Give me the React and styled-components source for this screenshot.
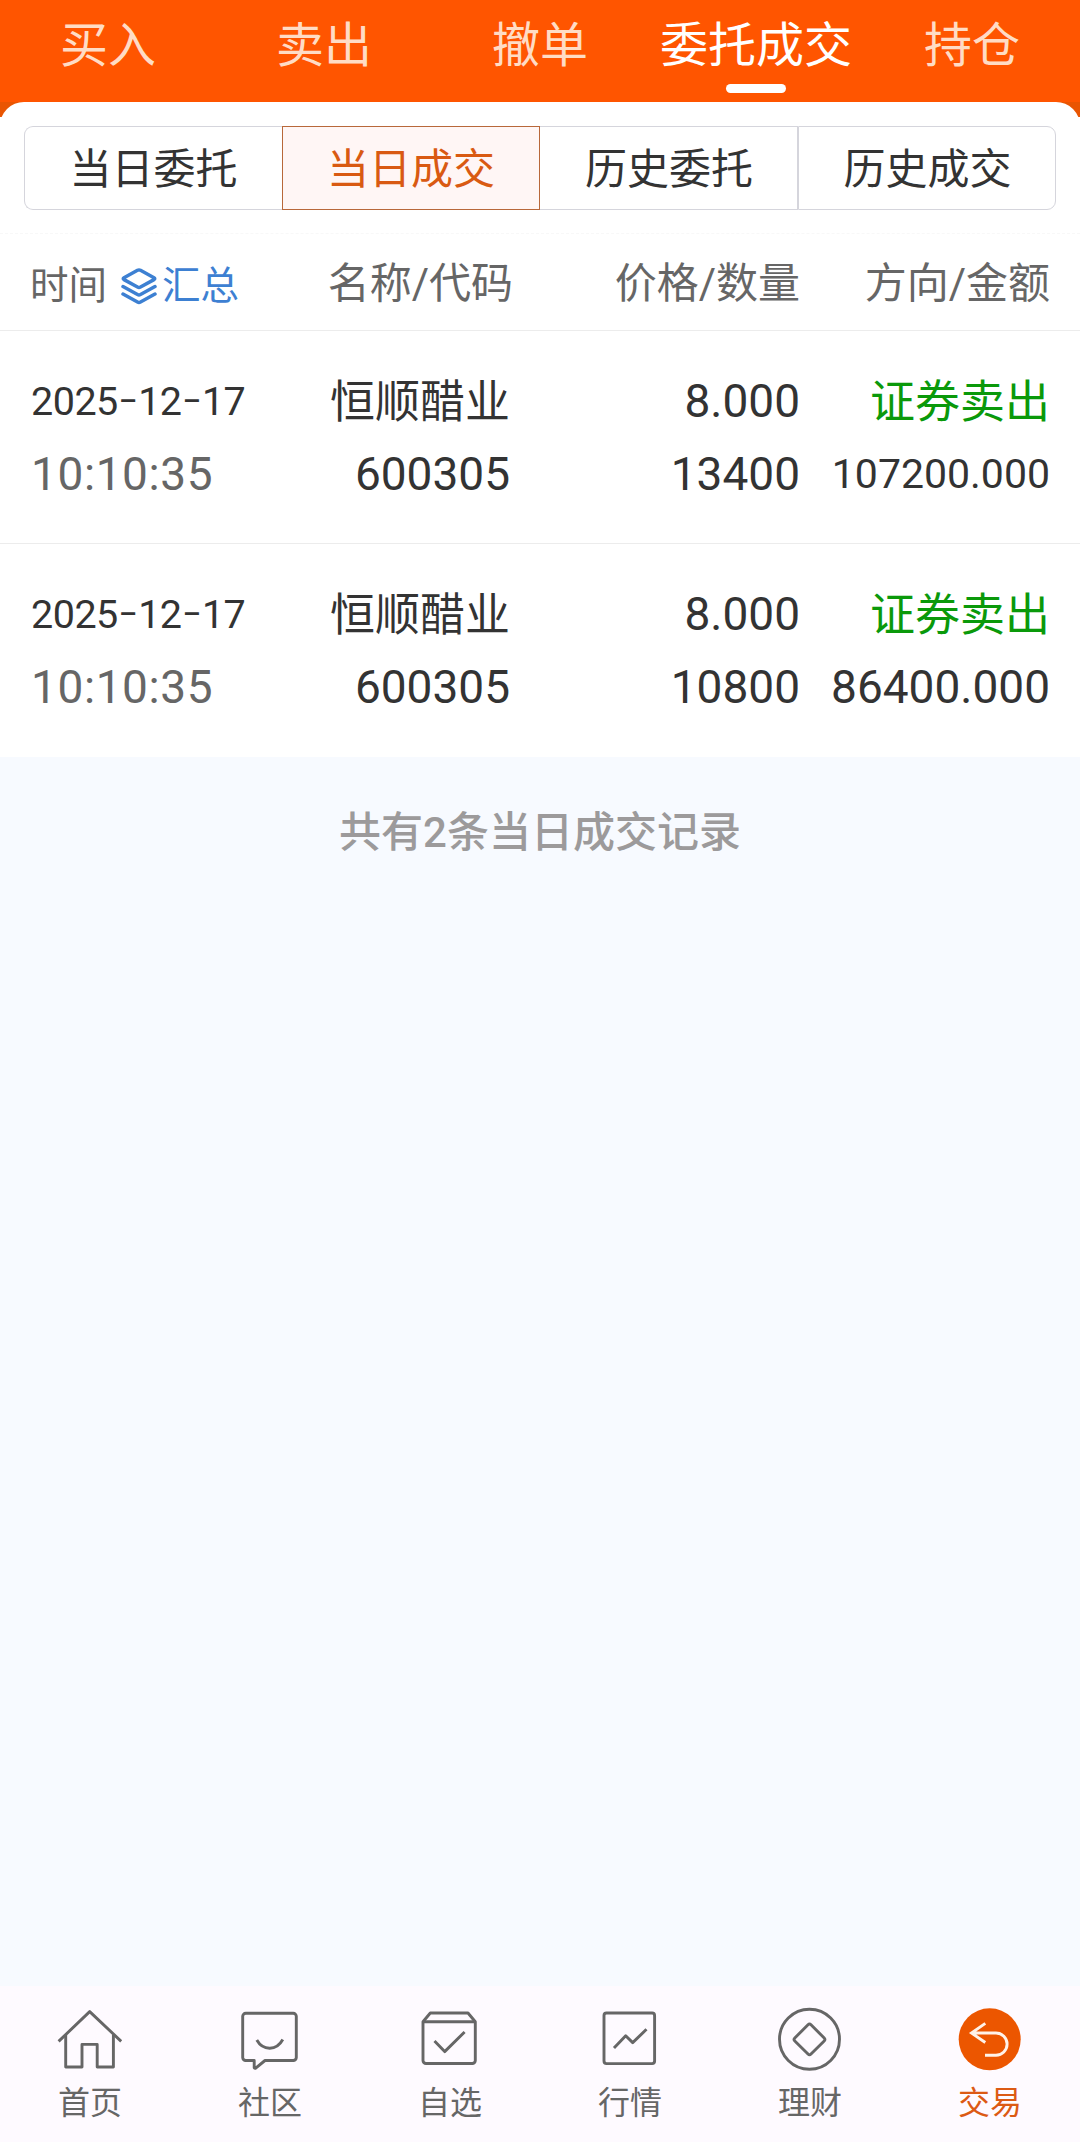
import React, { useState } from "react";
import styled, { createGlobalStyle } from "styled-components";

const GlobalStyle = createGlobalStyle`
* {
	box-sizing: border-box;
}

body {
	margin: 0;
	background: #f7faff;
	font-family: Roboto, "Noto Sans CJK SC", sans-serif;
	color: #333;
}
`;

const Page = styled.div`
display: flex;
flex-direction: column;
width: 1080px;
height: 2142px;
background: #f7faff;
overflow: hidden;
`;

const TopBar = styled.nav`
display: flex;
height: 102px;
background: #ff5500;
`;

const TopTab = styled.a`
display: flex;
flex-direction: column;
align-items: center;
width: 216px;
padding-top: 16px;
font-size: 48px;
line-height: 60px;
color: ${({ $active }) => ($active ? "#fff" : "#ffdcc5")};
cursor: pointer;

&::after {
	content: "";
	width: 60px;
	height: 9px;
	margin-top: 8px;
	border-radius: 4.5px;
	background: ${({ $active }) => ($active ? "#fff" : "transparent")};
}
`;

const PanelBack = styled.div`
background: linear-gradient(#e95502 15px, #fff 15px);
`;

const Panel = styled.main`
background: #fff;
border-radius: 24px 24px 0 0;
`;

const SegmentWrap = styled.div`
height: 132px;
padding: 24px 24px 0;
border-bottom: 1px dashed #f8f8f8;
`;

const Segment = styled.div`
display: flex;
height: 84px;
`;

const SegmentItem = styled.button`
flex: none;
width: 258px;
margin: 0;
padding: 3px 0 0;
border: 1px solid ${({ $active }) => ($active ? "#b8683a" : "#d5d5dc")};
border-left-width: ${({ $merge }) => ($merge ? 0 : "1px")};
background: ${({ $active }) => ($active ? "#fff6f5" : "#fff")};
color: ${({ $active }) => ($active ? "#d95a12" : "#333")};
font-family: inherit;
font-size: 42px;
line-height: 79px;
cursor: pointer;

&:first-child {
	border-right-width: 0;
	border-radius: 9px 0 0 9px;
}

&:nth-child(n + 3) {
	padding-left: 1px;
}

&:last-child {
	border-radius: 0 9px 9px 0;
}
`;

const Columns = styled.div`
display: grid;
grid-template-columns: 220px 260px 290px 250px;
padding: 0 30px;
`;

const HeaderRow = styled(Columns)`
height: 97px;
padding-top: 19px;
border-bottom: 1px solid #ececec;
color: #666;
font-size: 42px;
line-height: 62px;
`;

const HeaderCell = styled.div`
text-align: right;
white-space: nowrap;

&:nth-child(2) {
	margin-right: -3px;
}
`;

const TimeHeader = styled.div`
display: flex;
align-items: center;
align-self: start;
padding-top: 2px;
font-size: 38.5px;
`;

const Summary = styled.span`
display: flex;
align-items: center;
gap: 5px;
margin-left: 14px;
color: #3d80d2;
`;

const RecordRow = styled(Columns)`
height: 213px;
padding-top: 34px;
border-bottom: ${({ $last }) => ($last ? "none" : "1px solid #ececec")};
`;

const Cell = styled.div`
display: flex;
flex-direction: column;
align-items: ${({ $left }) => ($left ? "flex-start" : "flex-end")};
font-size: 46px;
line-height: 73px;
white-space: nowrap;
`;

const DateText = styled.span`
padding-left: 1px;
font-size: 39.5px;
letter-spacing: -0.5px;
`;

const Dash = styled.span`
font-family: Inter, sans-serif;
font-size: 46px;
font-weight: 300;
line-height: 1;
`;

const TimeText = styled.span`
padding-left: 1px;
letter-spacing: 0.6px;
color: #666;
`;

const Name = styled.span`
height: 73px;
padding-top: 2px;
font-size: 45px;
line-height: 72px;
color: ${({ $sell }) => ($sell ? "#0a990a" : "#333")};
`;

const Amount = styled.span`
font-size: ${({ $long }) => ($long ? "41px" : "46px")};
`;

const Total = styled.p`
flex: 1;
margin: 0;
padding-top: 45px;
text-align: center;
font-size: 42px;
font-weight: 500;
line-height: 62px;
color: #9c9a9b;
`;

const BottomBar = styled.nav`
display: flex;
height: 156px;
background: #fefaff;
`;

const BottomItem = styled.a`
display: flex;
flex-direction: column;
align-items: center;
width: 180px;
padding-top: 20px;
font-size: 32px;
line-height: 40px;
color: ${({ $active }) => ($active ? "#dc5a14" : "#666")};
cursor: pointer;

svg {
	overflow: visible;
}

span {
	margin-top: 13px;
}
`;

const LineIcon = ({ children }) => (
	<svg width="64" height="64" viewBox="0 0 64 64" fill="none" stroke="#666" strokeWidth="2.9" strokeLinejoin="round">
		{children}
	</svg>
);

const LayersIcon = () => (
	<svg width="36" height="38" viewBox="0 0 36 38" fill="none" stroke="currentColor" strokeWidth="3.5" strokeLinejoin="round" strokeLinecap="round">
		<path d="M16.5 3.3Q18 2.5 19.5 3.3L33 10.8Q34.5 11.7 33 12.6L19.5 20Q18 20.8 16.5 20L3 12.6Q1.5 11.7 3 10.8Z" />
		<path d="M2 19.5 16.5 27.5Q18 28.3 19.5 27.5L34 19.5" />
		<path d="M2 27 16.5 35Q18 35.8 19.5 35L34 27" />
	</svg>
);

const HomeIcon = () => (
	<LineIcon>
		<path d="M.6 35.4 31.7 5.6 63.2 35.4" />
		<path d="M7.7 29V61H24V38.4H39.2V61H55.4V29" />
	</LineIcon>
);

const ChatIcon = () => (
	<LineIcon>
		<path d="M7.7 7.3H55.3a3 3 0 0 1 3 3V51.5a3 3 0 0 1-3 3H27L17.4 62.3 16.2 61.8V54.5H7.7a3 3 0 0 1-3-3V10.3a3 3 0 0 1 3-3Z" />
		<path d="M18.8 34C25 45 38.5 45 44.8 33.5" />
	</LineIcon>
);

const BoxIcon = () => (
	<LineIcon>
		<path d="M5 15.7V54.5a3 3 0 0 0 3 3H54.3a3 3 0 0 0 3-3V15.7L50 7H12.3Z" />
		<path d="M5 15.7H57.3" />
		<path d="M16.5 35 26.7 45.6 46.6 26" />
	</LineIcon>
);

const ChartIcon = () => (
	<LineIcon>
		<rect x="6" y="7" width="50.6" height="50.6" rx="2.5" />
		<path d="M16 42 27.7 29.8 34.7 36.6 48.5 23.3" />
	</LineIcon>
);

const CoinIcon = () => (
	<LineIcon>
		<circle cx="31.5" cy="33.3" r="30" />
		<path d="M30 18.8Q31.5 17.3 33 18.8L46.2 32Q47.7 33.5 46.2 35L33 48Q31.5 49.5 30 48L16.8 35Q15.3 33.5 16.8 32Z" />
	</LineIcon>
);

const TradeIcon = () => (
	<svg width="64" height="64" viewBox="0 0 64 64" fill="none">
		<circle cx="31.7" cy="33.3" r="31" fill="#ec5600" />
		<path d="M27.3 17.4 13.5 27 27.3 36.5M14 27H38a11.1 11.1 0 0 1 0 22.2H27" stroke="#fff2e8" strokeWidth="2.9" />
	</svg>
);

const topTabs = ["买入", "卖出", "撤单", "委托成交", "持仓"];
const segments = ["当日委托", "当日成交", "历史委托", "历史成交"];

const records = [
	{ id: 1, date: "2025-12-17", time: "10:10:35", name: "恒顺醋业", code: "600305", price: "8.000", count: "13400", side: "证券卖出", amount: "107200.000" },
	{ id: 2, date: "2025-12-17", time: "10:10:35", name: "恒顺醋业", code: "600305", price: "8.000", count: "10800", side: "证券卖出", amount: "86400.000" },
];

const bottomItems = [
	{ name: "首页", icon: <HomeIcon /> },
	{ name: "社区", icon: <ChatIcon /> },
	{ name: "自选", icon: <BoxIcon /> },
	{ name: "行情", icon: <ChartIcon /> },
	{ name: "理财", icon: <CoinIcon /> },
	{ name: "交易", icon: <TradeIcon />, active: true },
];

const Record = ({ item, last }) => {
const [year, month, day] = item.date.split("-");

return (
	<RecordRow $last={last}>
		<Cell $left>
			<DateText>{year}<Dash>-</Dash>{month}<Dash>-</Dash>{day}</DateText>
			<TimeText>{item.time}</TimeText>
		</Cell>
		<Cell>
			<Name>{item.name}</Name>
			<span>{item.code}</span>
		</Cell>
		<Cell>
			<span>{item.price}</span>
			<span>{item.count}</span>
		</Cell>
		<Cell>
			<Name $sell>{item.side}</Name>
			{/* long amounts get a smaller size so they stay in the column */}
			<Amount $long={item.amount.length > 9}>{item.amount}</Amount>
		</Cell>
	</RecordRow>
);
};

const App = () => {
const [tab, setTab] = useState(3);
const [segment, setSegment] = useState(1);

return (
	<Page>
		<GlobalStyle />
		<TopBar>
			{topTabs.map((name, index) => (
				<TopTab key={name} $active={index === tab} onClick={() => setTab(index)}>{name}</TopTab>
			))}
		</TopBar>

		<PanelBack>
			<Panel>
				<SegmentWrap>
					<Segment>
						{segments.map((name, index) => (
							<SegmentItem
								key={name}
								$active={index === segment}
								$merge={index === segment + 1}
								onClick={() => setSegment(index)}
							>
								{name}
							</SegmentItem>
						))}
					</Segment>
				</SegmentWrap>
				<HeaderRow>
					<TimeHeader>
						时间
						<Summary><LayersIcon />汇总</Summary>
					</TimeHeader>
					<HeaderCell>名称/代码</HeaderCell>
					<HeaderCell>价格/数量</HeaderCell>
					<HeaderCell>方向/金额</HeaderCell>
				</HeaderRow>
				{records.map((item, index) => (
					<Record key={item.id} item={item} last={index === records.length - 1} />
				))}
			</Panel>
		</PanelBack>

		<Total>共有{records.length}条当日成交记录</Total>

		<BottomBar>
			{bottomItems.map((item) => (
				<BottomItem key={item.name} $active={item.active}>
					{item.icon}
					<span>{item.name}</span>
				</BottomItem>
			))}
		</BottomBar>
	</Page>
);
};

export default App;
